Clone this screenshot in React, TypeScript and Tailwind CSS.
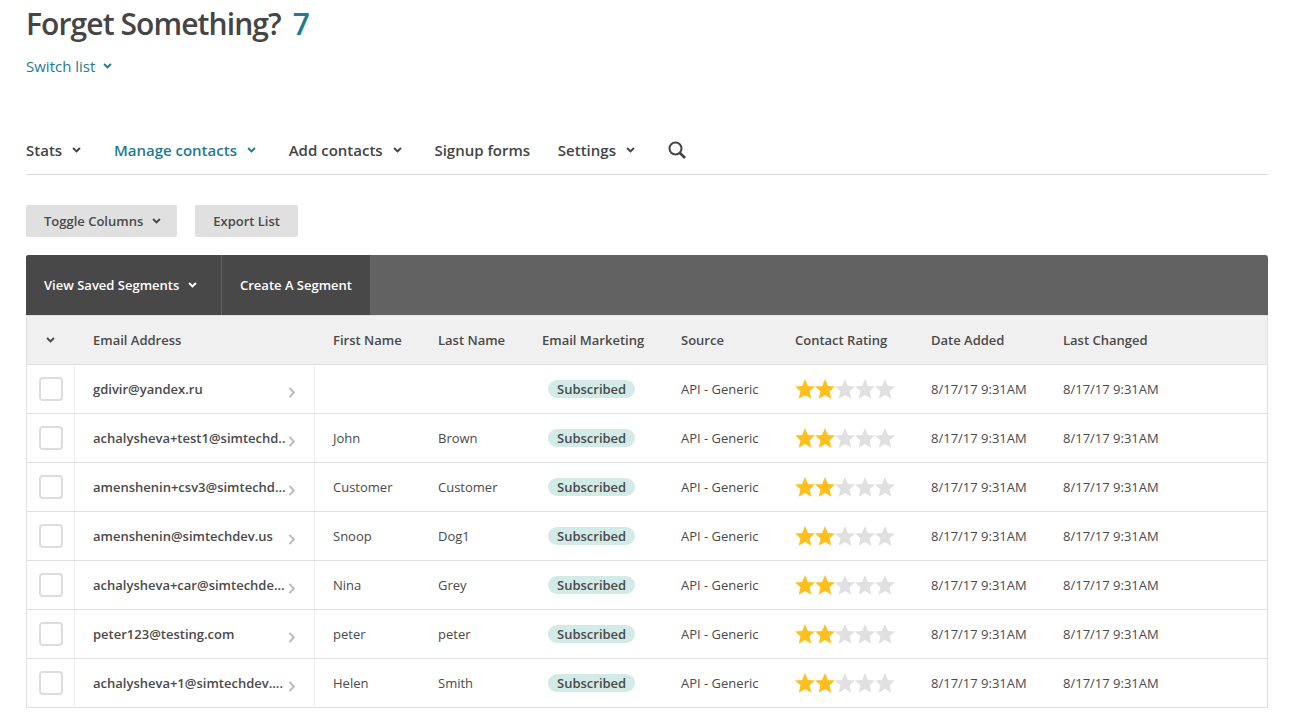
import type { ReactNode } from "react";

const rows = [
  { email: "gdivir@yandex.ru", first: "", last: "" },
  { email: "achalysheva+test1@simtechd..", first: "John", last: "Brown" },
  { email: "amenshenin+csv3@simtechd...", first: "Customer", last: "Customer" },
  { email: "amenshenin@simtechdev.us", first: "Snoop", last: "Dog1" },
  { email: "achalysheva+car@simtechde...", first: "Nina", last: "Grey" },
  { email: "peter123@testing.com", first: "peter", last: "peter" },
  { email: "achalysheva+1@simtechdev....", first: "Helen", last: "Smith" },
];

function Chevron({ className }: { className?: string }) {
  return (
    <svg viewBox="0 0 10 7" className={className} fill="none" stroke="currentColor" strokeWidth="2.3">
      <path d="M1 1.2l4 4 4-4" />
    </svg>
  );
}

function Star({ on }: { on: boolean }) {
  return (
    <svg viewBox="0 0 20 20" className={on ? "h-5 w-5 text-[#ffc01e]" : "h-5 w-5 text-[#e0e0e0]"} fill="currentColor">
      <path d="M10 0l2.9 7 7.1.6-5.4 4.7 1.7 7.5-6.3-3.9-6.3 3.9 1.7-7.5L0 7.6 7.1 7z" />
    </svg>
  );
}

function NavItem({ children, active, arrow = true }: { children: ReactNode; active?: boolean; arrow?: boolean }) {
  return (
    <a className={`flex items-center gap-[10px] text-[15px] font-semibold ${active ? "text-[#1f7a90]" : "text-[#444]"}`}>
      {children}
      {arrow && <Chevron className="mr-[5px] h-[6px] w-[9px]" />}
    </a>
  );
}

export default function App() {
  return (
    <div className="h-[721px] overflow-hidden bg-white pr-[40px] pl-[26px] font-['Open_Sans',sans-serif] text-[13px] text-[#4a4a4a]">
      <h1 className="flex h-[46px] items-center gap-[12px] text-[30px] font-semibold tracking-[-0.9px] text-[#454545]">
        Forget Something?
        <span className="text-[#1f7a90]">7</span>
      </h1>
      <a className="mt-[9px] flex h-[22px] items-center gap-[8px] text-[15px] text-[#1f7a90]">
        Switch list
        <Chevron className="h-[6px] w-[9px]" />
      </a>

      <nav className="mt-[51px] flex h-[47px] items-start border-b border-[#d9d9d9] pt-[10px]">
        <div className="flex h-[24px] items-center gap-[27.75px]">
          <NavItem>Stats</NavItem>
          <NavItem active>Manage contacts</NavItem>
          <NavItem>Add contacts</NavItem>
          <NavItem arrow={false}>Signup forms</NavItem>
          <NavItem>Settings</NavItem>
          <svg viewBox="0 0 18 18" className="mb-[1px] h-[18px] w-[18px] text-[#444]" fill="none" stroke="currentColor" strokeWidth="2">
            <circle cx="7.5" cy="7.5" r="6" />
            <path d="M12 12l5 5" strokeWidth="2.6" />
          </svg>
        </div>
      </nav>

      <div className="mt-[30px] flex gap-[18px]">
        <button className="flex h-[32px] items-center gap-[9px] rounded-[2px] bg-[#e0e0e0] pr-[16px] pl-[18px] text-[13px] font-semibold text-[#4a4a4a]">
          <span className="pt-[2px]">Toggle Columns</span>
          <Chevron className="h-[6px] w-[9px]" />
        </button>
        <button className="h-[32px] rounded-[2px] bg-[#e0e0e0] px-[18px] pt-[2px] text-[13px] font-semibold text-[#4a4a4a]">Export List</button>
      </div>

      <div className="mt-[18px] flex h-[61px] overflow-hidden rounded-t-[3px] border-b border-[#e0e0e0] bg-[#626262] text-[13px] font-semibold text-white">
        <button className="flex w-[196px] items-center gap-[9px] border-r border-[#626262] bg-[#484848] pl-[18px]">
          <span className="pt-[2px]">View Saved Segments</span>
          <Chevron className="h-[6px] w-[9px]" />
        </button>
        <button className="w-[148px] bg-[#484848] pt-[2px] pl-[18px] text-left">Create A Segment</button>
      </div>

      <div className="border-x border-[#e0e0e0]">
        <div className="flex h-[49px] items-center border-b border-[#e0e0e0] bg-[#f0f0f0] font-semibold">
          <div className="flex w-[48px] justify-center pr-[1px]">
            <Chevron className="h-[6px] w-[9px]" />
          </div>
          <div className="w-[240px] pt-[2px] pl-[18px]">Email Address</div>
          <div className="w-[105px] pt-[2px] pl-[18px]">First Name</div>
          <div className="w-[104px] pt-[2px] pl-[18px]">Last Name</div>
          <div className="w-[139px] pt-[2px] pl-[18px]">Email Marketing</div>
          <div className="w-[114px] pt-[2px] pl-[18px]">Source</div>
          <div className="w-[136px] pt-[2px] pl-[18px]">Contact Rating</div>
          <div className="w-[132px] pt-[2px] pl-[18px]">Date Added</div>
          <div className="pt-[2px] pl-[18px]">Last Changed</div>
        </div>
        {rows.map((row) => (
          <div key={row.email} className="flex h-[49px] border-b border-[#e0e0e0]">
            <div className="flex w-[48px] items-center border-r border-[#eee] pl-[12px]">
              <span className="h-[24px] w-[24px] rounded-[4px] border-2 border-[#ddd]" />
            </div>
            <div className="relative flex w-[240px] items-center border-r border-[#eee] pt-[2px] pl-[18px] font-semibold">
              {row.email}
              <svg viewBox="0 0 8 12" className="absolute top-[22px] left-[213px] h-[11px] w-[8px] text-[#bbb]" fill="none" stroke="currentColor" strokeWidth="2.2">
                <path d="M1.2 1l4.8 5-4.8 5" />
              </svg>
            </div>
            <div className="flex w-[105px] items-center pt-[2px] pl-[18px]">{row.first}</div>
            <div className="flex w-[104px] items-center pt-[2px] pl-[18px]">{row.last}</div>
            <div className="flex w-[139px] items-center pl-[24px]">
              <span className="flex h-[18px] items-center rounded-full bg-[#d3ebe6] px-[9px] pt-[2px] font-semibold">Subscribed</span>
            </div>
            <div className="flex w-[114px] items-center pt-[2px] pl-[18px]">API - Generic</div>
            <div className="flex w-[136px] items-center pl-[18px]">
              {[0, 1, 2, 3, 4].map((i) => (
                <Star key={i} on={i < 2} />
              ))}
            </div>
            <div className="flex w-[132px] items-center pt-[2px] pl-[18px]">8/17/17 9:31AM</div>
            <div className="flex items-center pt-[2px] pl-[18px]">8/17/17 9:31AM</div>
          </div>
        ))}
      </div>
    </div>
  );
}
